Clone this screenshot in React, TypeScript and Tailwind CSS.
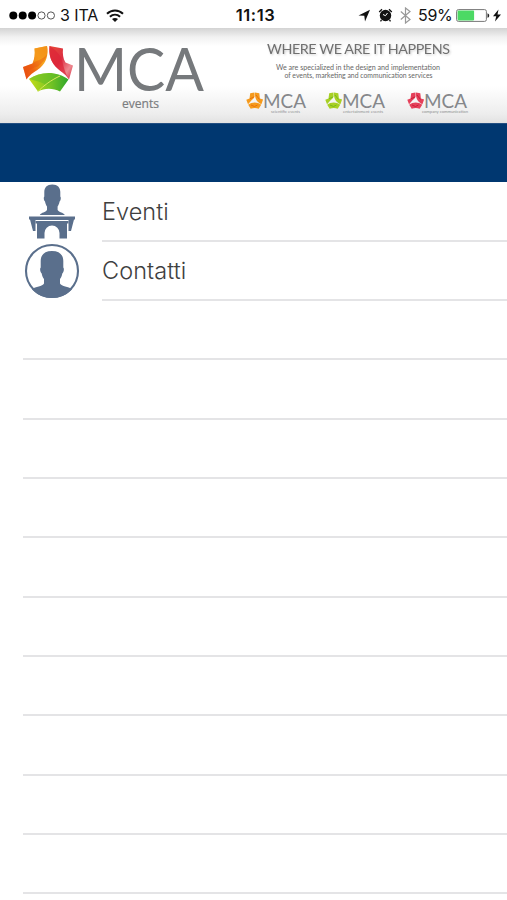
type IconProps = { className?: string };

const menuItems = [
  { label: 'Eventi', Icon: SpeakerIcon },
  { label: 'Contatti', Icon: ContactIcon },
];

const brands = [
  { name: 'scientific events', color: '#f59a1c', shade: '#e8710c', gap: 'ml-0', textStart: 25, textWidth: 29 },
  { name: 'entertainment events', color: '#a8d025', shade: '#79b81c', gap: 'ml-[17px]', textStart: 18, textWidth: 40 },
  { name: 'company communication', color: '#e5405a', shade: '#c91f38', gap: 'ml-[20px]', textStart: 15, textWidth: 46 },
];

function SpeakerIcon({ className }: IconProps) {
  return (
    <svg viewBox="0 0 56 56" className={className} fill="#5a6f8c">
      <path d="M28.300 1.500c5.300 0 8 3 8 7.500v4.500c1 1 .5 4-.7 5-.5 2.500-1.300 4-2 5v3.500c1.500 2.500 5.500 2.200 7.200 5h-25c1.700-2.800 5.700-2.500 7.200-5v-3.500c-.7-1-1.500-2.500-2-5-1.200-1-1.700-4-.7-5V9c0-4.500 2.700-7.500 8-7.500Z" />
      <path d="M5 33.500h46v3h-1L47 48h-2.500v-11h-33v11H9L6 36.500H5Z" />
      <path d="M11.500 38h33v2.500H43V55.500h-7.500V50a7.500 7.500 0 0 0-15 0v5.500H13V40.500h-1.500Z" />
    </svg>
  );
}

function ContactIcon({ className }: IconProps) {
  return (
    <svg viewBox="0 0 56 56" className={className} fill="#5a6f8c">
      <circle cx="28" cy="28" r="26" fill="none" stroke="#5a6f8c" strokeWidth="2.100" />
      <path d="M28 8c7.500 0 11.300 3.800 11.300 10v6.500c1.200 1 .4 5-1 6-.4 2.500-1.300 4.200-2.300 5.500v4.500c1.500 3 8.500 3 12 5.500C43.500 51.500 36 55 28 55S12.500 51.500 8 46c3.500-2.500 10.500-2.500 12-5.500V36c-1-1.300-1.900-3-2.300-5.500-1.400-1-2.200-5-1-6V18c0-6.200 3.800-10 11.300-10Z" />
    </svg>
  );
}

function MainLogo() {
  return (
    <svg width="190" height="74" viewBox="18 40 190 74" className="shrink-0 overflow-visible">
      <defs>
        <linearGradient id="orange" x1="0" y1="1" x2="1" y2="0">
          <stop offset="0" stopColor="#e94a12" />
          <stop offset=".35" stopColor="#ee6412" />
          <stop offset=".65" stopColor="#f7a51e" />
          <stop offset="1" stopColor="#f08a12" />
        </linearGradient>
        <linearGradient id="red" x1="0" y1="0" x2="1" y2="1">
          <stop offset="0" stopColor="#e84a35" />
          <stop offset=".45" stopColor="#dc2f43" />
          <stop offset=".75" stopColor="#ee8990" />
          <stop offset="1" stopColor="#d3243c" />
        </linearGradient>
        <linearGradient id="green" x1="0" y1="0" x2="1" y2="0">
          <stop offset="0" stopColor="#c5dc18" />
          <stop offset=".5" stopColor="#7dc623" />
          <stop offset="1" stopColor="#2ea72b" />
        </linearGradient>
      </defs>
      <path d="M34.500 48.500 47 46c1.500 9-.5 16.500-7 22-3.500 3-9 5-13.500 11.500L23 67l9.500-3.500C34.500 59 35 54 34.500 48.500Z" fill="url(#orange)" />
      <path d="M34.500 48.500c1 6 .5 10.500-2 15 3-3.500 9-4.500 14.500-9 .7-3 .6-6 0-8.500Z" fill="#f4941a" opacity=".7" />
      <path d="M26.500 79.500c0-8 3-11 11.500-13 4.500-3.500 7.500-7 9-12-4 5-10 5.500-14.500 9L23 67Z" fill="#e9500f" opacity=".4" />
      <path d="M49.500 46 63 48.500c-.5 5.500 0 10 2.500 14l7.500 3-4 14c-4-6.500-9.500-8.500-13.500-13C50.500 61 48.700 54 49.500 46Z" fill="url(#red)" />
      <path d="M49.500 46c6.500 4 11.500 9 13 16 1.200 5.500 3 12 6.500 17.500-4-6.500-9.500-8.500-13.500-13C50.500 61 48.700 54 49.500 46Z" fill="#dd2438" opacity=".7" />
      <path d="M29 79c11-8 28-8.500 39.500.5L60 91.500c-7-3.500-15-3.700-22 0Z" fill="url(#green)" />
      <path d="M29 79c6 1.500 13 3 18 6.500 5-3 9-6.500 13-10.500-11-3-22-2-31 4Z" fill="#63bd26" opacity=".55" />
      <path d="M38 91.500c5-5.500 14-12 22-15.500" fill="none" stroke="#dbe95c" strokeWidth="1" />
      <text x="74" y="91.300" fontFamily="Lato, sans-serif" fontSize="60" fill="#76797c" textLength="130" lengthAdjust="spacingAndGlyphs">
        MCA
      </text>
      <text x="122" y="107.500" fontFamily="'Open Sans', sans-serif" fontSize="12" fill="#7b7d80" stroke="#7b7d80" strokeWidth=".2" textLength="37" lengthAdjust="spacingAndGlyphs">
        events
      </text>
    </svg>
  );
}

function BrandLogo({ brand }: { brand: (typeof brands)[number] }) {
  return (
    <svg width="62" height="24" viewBox="0 0 62 24" className={brand.gap + ' shrink-0 overflow-visible'}>
      <g fill={brand.color}>
        <path d="m4.200 1.200 4.300-.7c.5 4-.3 6-2.700 7.500L2 12.300.3 7.800l3.200-1.200Z" />
        <path d="m9 .5 4.300.700.600 5.200 3.200 1.200-1.700 4.700C11.500 10 8.500 7.500 9 .5Z" />
        <path d="M2.200 12.800c4-3 9-3 13 0L12.700 16.800c-2.500-1-5.200-1-8 0Z" />
      </g>
      <path d="m4 6.800 4.300-2M10 3l3.500 4.500M5 13l3.500 1.500 3-1.500" stroke={brand.shade} strokeWidth="1" fill="none" />
      <text x="17" y="15.800" fontFamily="Lato, sans-serif" fontSize="19.500" fill="#85878a" textLength="43" lengthAdjust="spacingAndGlyphs">
        MCA
      </text>
      <text x={brand.textStart} y="20.500" fontFamily="Lato, sans-serif" fontSize="4" fill="#8d8f91" textLength={brand.textWidth} lengthAdjust="spacingAndGlyphs">
        {brand.name}
      </text>
    </svg>
  );
}

function StatusBar() {
  return (
    <div className="grid h-7 grid-cols-[1fr_auto_1fr] items-center bg-white pt-[2px] text-[16.5px] leading-none text-[#111]">
      <div className="flex items-center pl-[9px]">
        <svg width="47" height="9" viewBox="0 0 47 9">
          <g fill="#000">
            <circle cx="4.300" cy="4.500" r="4" />
            <circle cx="13.700" cy="4.500" r="4" />
            <circle cx="23.100" cy="4.500" r="4" />
          </g>
          <g fill="none" stroke="#555" strokeWidth="1">
            <circle cx="32.500" cy="4.500" r="3.600" />
            <circle cx="41.900" cy="4.500" r="3.600" />
          </g>
        </svg>
        <span className="ml-[4px] w-[40px] whitespace-nowrap text-[16px] tracking-[-0.1px]">3 ITA</span>
        <svg width="18" height="13" viewBox="0 0 18 13" className="ml-[6px]">
          <g fill="none" stroke="#111" strokeWidth="2">
            <path d="M1 4.700c4.500-4.300 11.500-4.300 16 0" />
            <path d="M3.900 7.800c3-2.700 7.200-2.700 10.200 0" />
          </g>
          <path d="M6 10c1.700-1.500 4.300-1.500 6 0l-3 3Z" fill="#111" />
        </svg>
      </div>
      <span className="pl-[4px] text-[16.5px] font-semibold tracking-[0.6px]">11:13</span>
      <div className="flex items-center justify-end pr-[6px]">
        <svg width="13" height="13" viewBox="0 0 13 13">
          <path d="M12 .8 7 12.500 6.300 6.700.5 6.500Z" fill="#111" />
        </svg>
        <svg width="15" height="14" viewBox="0 0 15 14" className="ml-[7px]">
          <circle cx="7.500" cy="7.500" r="5.700" fill="#111" />
          <path d="M1.200 4 4 1.200M13.800 4 11 1.200M3.500 12 2.500 13.300M11.500 12l1 1.300" stroke="#111" strokeWidth="1.300" />
          <path d="M9.500 5 7.500 7.700 5 6.500" stroke="#fff" strokeWidth="1" fill="none" />
        </svg>
        <svg width="11" height="17" viewBox="0 0 11 17" className="ml-[7px]">
          <path d="m.8 4.500 9.200 8L5.500 16V1L10 4.500l-9.200 8" fill="none" stroke="#999" strokeWidth="1.200" />
        </svg>
        <span className="ml-[7px] w-[35px] whitespace-nowrap text-[16px] tracking-[-0.3px]">59%</span>
        <svg width="34" height="13" viewBox="0 0 34 13" className="ml-[3px]">
          <rect x=".6" y=".6" width="29.800" height="11.800" rx="1.800" fill="#fff" stroke="#777" strokeWidth="1" />
          <rect x="1.600" y="1.600" width="16.500" height="9.800" rx=".8" fill="#4cd964" />
          <path d="M31.500 4.200c2.300.8 2.300 3.800 0 4.600Z" fill="#222" />
        </svg>
        <svg width="8" height="13" viewBox="0 0 8 13" className="ml-[3px]">
          <path d="M5.500.5 0 7.200h3.200L2 12.500 8 5.500H4.500Z" fill="#111" />
        </svg>
      </div>
    </div>
  );
}

function Banner() {
  return (
    <header className="flex h-[95px] items-start bg-[linear-gradient(to_bottom,#d3d3d3_0,#f1f1f1_9px,#fff_18px,#fff_58px,#ededed_86px,#e2e2e2_95px)] pl-[18px] pt-[12px]">
      <MainLogo />
      <div className="ml-[38px] w-[226px]">
        <svg width="226" height="42" viewBox="0 0 226 42" className="block" fontFamily="Lato, sans-serif">
          <text x="21" y="13.500" fontSize="14.300" fill="#707070" textLength="183" className="drop-shadow-[1px_1px_1px_#ccc]">
            WHERE WE ARE IT HAPPENS
          </text>
          <g fill="#666" fontSize="7">
            <text x="30" y="29.500" textLength="164" lengthAdjust="spacingAndGlyphs">
              We are specialized in the design and implementation
            </text>
            <text x="38.500" y="37.500" textLength="148" lengthAdjust="spacingAndGlyphs">
              of events, marketing and communication services
            </text>
          </g>
        </svg>
        <div className="mt-[10px] flex">
          {brands.map((brand) => (
            <BrandLogo key={brand.name} brand={brand} />
          ))}
        </div>
      </div>
    </header>
  );
}

export default function App() {
  return (
    <div className="h-[900px] w-[507px] overflow-hidden bg-white font-['Inter',sans-serif]">
      <StatusBar />
      <Banner />
      <div className="h-[59px] border-t border-[#234f82] bg-[#003770]" />

      <ul className="pt-[0.4px]">
        {menuItems.map(({ label, Icon }) => (
          <li key={label} className="flex h-[59.4px] pl-[24px]">
            <Icon className="mt-[1px] h-[56px] w-[56px] shrink-0" />
            <div className="ml-[22px] flex flex-1 items-center border-b-2 border-[#e4e4e6] pt-[1px] text-[23.5px] font-light tracking-[0.05px] text-[#3f3f3f]">
              {label}
            </div>
          </li>
        ))}
        {/* linhas vazias da tabela */}
        {[...Array(10)].map((_, i) => (
          <li key={i} className="ml-[23px] h-[59.3px] border-b-2 border-[#e4e4e6]" />
        ))}
      </ul>
    </div>
  );
}
